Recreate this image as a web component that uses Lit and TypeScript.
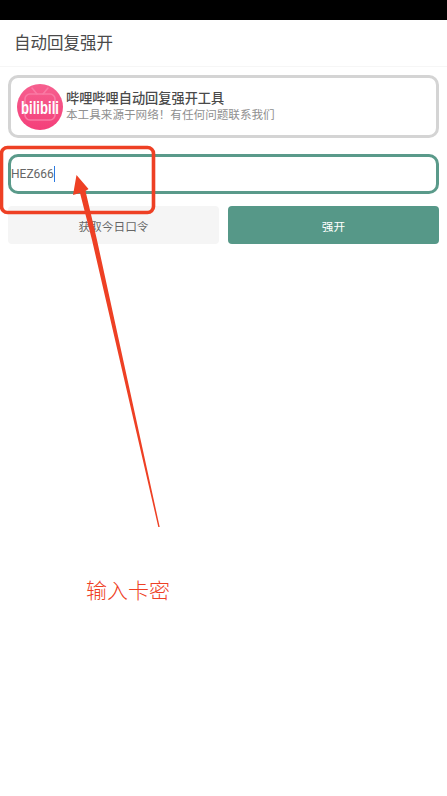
import { LitElement, html, css } from "lit";
import { customElement } from "lit/decorators.js";

@customElement("app-root")
export class AppRoot extends LitElement {
  static styles = css`
    :host {
      display: block;
      position: relative;
      width: 447px;
      height: 796px;
      overflow: hidden;
      background: #fff;
      font-family: "Noto Sans CJK SC", "Liberation Sans", sans-serif;
      color: #444;
    }
    .status { height: 20px; background: #000; }
    .header {
      height: 47px;
      box-sizing: border-box;
      display: flex;
      align-items: center;
      padding: 0 0 2px 14px;
      font-size: 16.5px;
      color: #4a4a4a;
      border-bottom: 1px solid #f6f6f6;
    }
    .content {
      padding: 8px 8px 0;
      display: flex;
      flex-direction: column;
    }
    .card {
      height: 63px;
      box-sizing: border-box;
      border: 3px solid #d4d4d4;
      border-radius: 10px;
      display: flex;
      align-items: center;
      gap: 3px;
      padding-left: 6px;
    }
    .logo { width: 46px; height: 46px; flex: none; display: block; overflow: visible; }
    .titles { display: flex; flex-direction: column; }
    .t1 { font-size: 13.2px; line-height: 17px; font-weight: 500; color: #4a4a4a; margin-top: -1px; }
    .t2 { font-size: 11.6px; line-height: 17px; color: #8f8f8f; }
    .input {
      margin-top: 16px;
      height: 40px;
      box-sizing: border-box;
      border: 3px solid #5a9a8a;
      border-radius: 10px;
      display: flex;
      align-items: center;
      font-family: "Roboto", "Liberation Sans", sans-serif;
      font-size: 12px;
      color: #666;
    }
    .caret { width: 1.5px; height: 16px; background: #2a7ae2; }
    .actions {
      margin-top: 12px;
      display: grid;
      grid-template-columns: 211px 211px;
      justify-content: space-between;
    }
    .btn {
      height: 38px;
      border-radius: 4px;
      display: flex;
      align-items: center;
      justify-content: center;
      font-size: 11.7px;
    }
    .ghost { background: #f5f5f5; color: #666; }
    .primary { background: #569888; color: #fff; }
    .annot { position: absolute; left: 0; top: 0; width: 447px; height: 796px; pointer-events: none; }
    .note {
      position: absolute;
      left: 86px;
      top: 574px;
      font-size: 21px;
      line-height: 30px;
      font-weight: 300;
      color: #ee4024;
    }
  `;

  render() {
    return html`
      <div class="status"></div>
      <div class="header">自动回复强开</div>
      <div class="content">
        <div class="card">
          <svg class="logo" viewBox="0 0 46 46">
            <defs>
              <linearGradient id="pink" x1="0" y1="0" x2="0" y2="1">
                <stop offset="0" stop-color="#f6608f" />
                <stop offset="1" stop-color="#f43f7a" />
              </linearGradient>
            </defs>
            <circle cx="23" cy="23" r="23" fill="url(#pink)" />
            <g fill="none" stroke="#f97aa4" stroke-width="1.6" stroke-linecap="round">
              <rect x="8" y="10" width="30" height="26" rx="5" />
              <path d="M15 4 L20 10 M31 4 L26 10" />
            </g>
            <text x="4" y="30" font-family="'Liberation Sans', sans-serif" font-size="18.5" font-weight="700" fill="#fff" textLength="38" lengthAdjust="spacingAndGlyphs">bilibili</text>
          </svg>
          <div class="titles">
            <div class="t1">哔哩哔哩自动回复强开工具</div>
            <div class="t2">本工具来源于网络！有任何问题联系我们</div>
          </div>
        </div>
        <div class="input"><span>HEZ666</span><span class="caret"></span></div>
        <div class="actions">
          <div class="btn ghost">获取今日口令</div>
          <div class="btn primary">强开</div>
        </div>
      </div>
      <svg class="annot" viewBox="0 0 447 796">
        <rect x="1.5" y="147.5" width="152" height="65" rx="6" fill="none" stroke="#ee4024" stroke-width="3.6" />
        <path d="M76.5 175 L88.5 189 L85.5 191 L97 240 L159.7 527 L158.3 527 L92 240 L80 193 L73 195 Z" fill="#ee4024" />
      </svg>
      <div class="note">输入卡密</div>
    `;
  }
}
